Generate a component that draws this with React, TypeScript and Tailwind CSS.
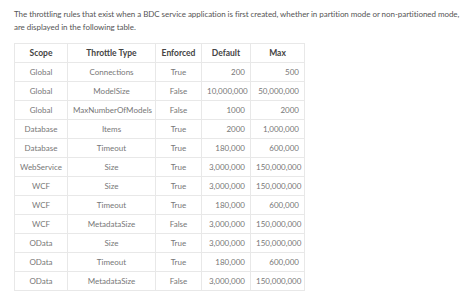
const rows = [
  ["Global", "Connections", "True", "200", "500"],
  ["Global", "ModelSize", "False", "10,000,000", "50,000,000"],
  ["Global", "MaxNumberOfModels", "False", "1000", "2000"],
  ["Database", "Items", "True", "2000", "1,000,000"],
  ["Database", "Timeout", "True", "180,000", "600,000"],
  ["WebService", "Size", "True", "3,000,000", "150,000,000"],
  ["WCF", "Size", "True", "3,000,000", "150,000,000"],
  ["WCF", "Timeout", "True", "180,000", "600,000"],
  ["WCF", "MetadataSize", "False", "3,000,000", "150,000,000"],
  ["OData", "Size", "True", "3,000,000", "150,000,000"],
  ["OData", "Timeout", "True", "180,000", "600,000"],
  ["OData", "MetadataSize", "False", "3,000,000", "150,000,000"],
];

const cols = [
  { name: "Scope", w: "w-[53px]", align: "text-center" },
  { name: "Throttle Type", w: "w-[88px]", align: "text-center" },
  { name: "Enforced", w: "w-[46px]", align: "text-center" },
  { name: "Default", w: "w-[49px]", align: "text-right" },
  { name: "Max", w: "w-[54px]", align: "text-right" },
];

export default function App() {
  return (
    <div className="w-[474px] h-[302px] bg-white pl-[14px] pr-[4px] pt-[8px] font-['Lato',sans-serif] text-[8px] text-[#555]">
      <p className="leading-[13px] mb-[9px] tracking-[-0.05px]">
        The throttling rules that exist when a BDC service application is first created, whether in partition mode or
        non-partitioned mode, are displayed in the following table.
      </p>
      <table className="border-collapse table-fixed w-[290px]">
        <thead>
          <tr className="h-[19px]">
            {cols.map((c) => (
              <th
                key={c.name}
                className={`${c.w} border border-[#e8e8e8] font-bold text-[8.5px] text-[#444] text-center px-[5px] py-0`}
              >
                {c.name}
              </th>
            ))}
          </tr>
        </thead>
        <tbody>
          {rows.map((r, i) => (
            <tr key={i} className="h-[19px]">
              {r.map((v, j) => (
                <td
                  key={j}
                  className={`border border-[#e8e8e8] text-[#777] px-[5px] py-0 whitespace-nowrap ${cols[j].align}`}
                >
                  {v}
                </td>
              ))}
            </tr>
          ))}
        </tbody>
      </table>
    </div>
  );
}
